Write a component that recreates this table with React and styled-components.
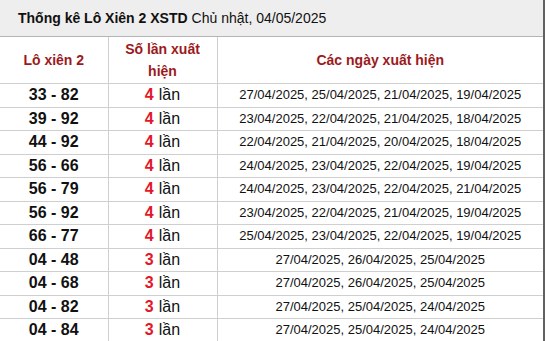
import React from "react";
import styled, { createGlobalStyle } from "styled-components";

const GlobalStyle = createGlobalStyle`
  html, body {
    margin: 0;
    padding: 0;
    background: #fff;
    font-family: "Liberation Sans", Arial, sans-serif;
  }
`;

const Container = styled.div`
  width: 543px;
  border-right: 2px solid #616161;
  height: 341px;
  overflow: hidden;
`;

const Title = styled.div`
  height: 37px;
  box-sizing: border-box;
  padding-left: 18px;
  display: flex;
  align-items: center;
  background: #efeeee;
  border-bottom: 1px solid #b4b4b4;
  font-size: 14px;
  color: #111;
`;

const TitleStrong = styled.b`
  margin-right: 4px;
`;

const StatTable = styled.table`
  width: 543px;
  border-collapse: collapse;
  table-layout: fixed;
  text-align: center;
`;

const HeadCell = styled.th`
  height: 46px;
  padding: 0 6px;
  border: 1px solid #cfcfcf;
  border-top: none;
  font-size: 14px;
  line-height: 22px;
  font-weight: bold;
  color: #9c1a1c;
  &:first-child {
    border-left: none;
  }
  &:last-child {
    border-right: none;
  }
`;

const Cell = styled.td`
  height: 22.5px;
  padding: 0;
  border: 1px solid #cfcfcf;
  font-size: ${(props) => (props.small ? "13px" : "16px")};
  font-weight: ${(props) => (props.bold ? "bold" : "normal")};
  color: #111;
  line-height: 22px;
  &:first-child {
    border-left: none;
  }
  &:last-child {
    border-right: none;
  }
`;

const Count = styled.b`
  color: #e3162b;
  margin-right: 5px;
`;

const rows = [
  ["33 - 82", 4, "27/04/2025, 25/04/2025, 21/04/2025, 19/04/2025"],
  ["39 - 92", 4, "23/04/2025, 22/04/2025, 21/04/2025, 18/04/2025"],
  ["44 - 92", 4, "22/04/2025, 21/04/2025, 20/04/2025, 18/04/2025"],
  ["56 - 66", 4, "24/04/2025, 23/04/2025, 22/04/2025, 19/04/2025"],
  ["56 - 79", 4, "24/04/2025, 23/04/2025, 22/04/2025, 21/04/2025"],
  ["56 - 92", 4, "23/04/2025, 22/04/2025, 21/04/2025, 19/04/2025"],
  ["66 - 77", 4, "25/04/2025, 23/04/2025, 22/04/2025, 19/04/2025"],
  ["04 - 48", 3, "27/04/2025, 26/04/2025, 25/04/2025"],
  ["04 - 68", 3, "27/04/2025, 26/04/2025, 25/04/2025"],
  ["04 - 82", 3, "27/04/2025, 25/04/2025, 24/04/2025"],
  ["04 - 84", 3, "27/04/2025, 25/04/2025, 24/04/2025"],
];

export default function App() {
  return (
    <Container>
      <GlobalStyle />
      <Title>
        <TitleStrong>Thống kê Lô Xiên 2 XSTD</TitleStrong>
        Chủ nhật, 04/05/2025
      </Title>
      <StatTable>
        <colgroup>
          <col style={{ width: 108 }} />
          <col style={{ width: 109 }} />
          <col />
        </colgroup>
        <thead>
          <tr>
            <HeadCell>Lô xiên 2</HeadCell>
            <HeadCell>Số lần xuất hiện</HeadCell>
            <HeadCell>Các ngày xuất hiện</HeadCell>
          </tr>
        </thead>
        <tbody>
          {rows.map(([pair, count, dates]) => (
            <tr key={pair}>
              <Cell bold>{pair}</Cell>
              <Cell>
                <Count>{count}</Count>lần
              </Cell>
              <Cell small>{dates}</Cell>
            </tr>
          ))}
        </tbody>
      </StatTable>
    </Container>
  );
}
